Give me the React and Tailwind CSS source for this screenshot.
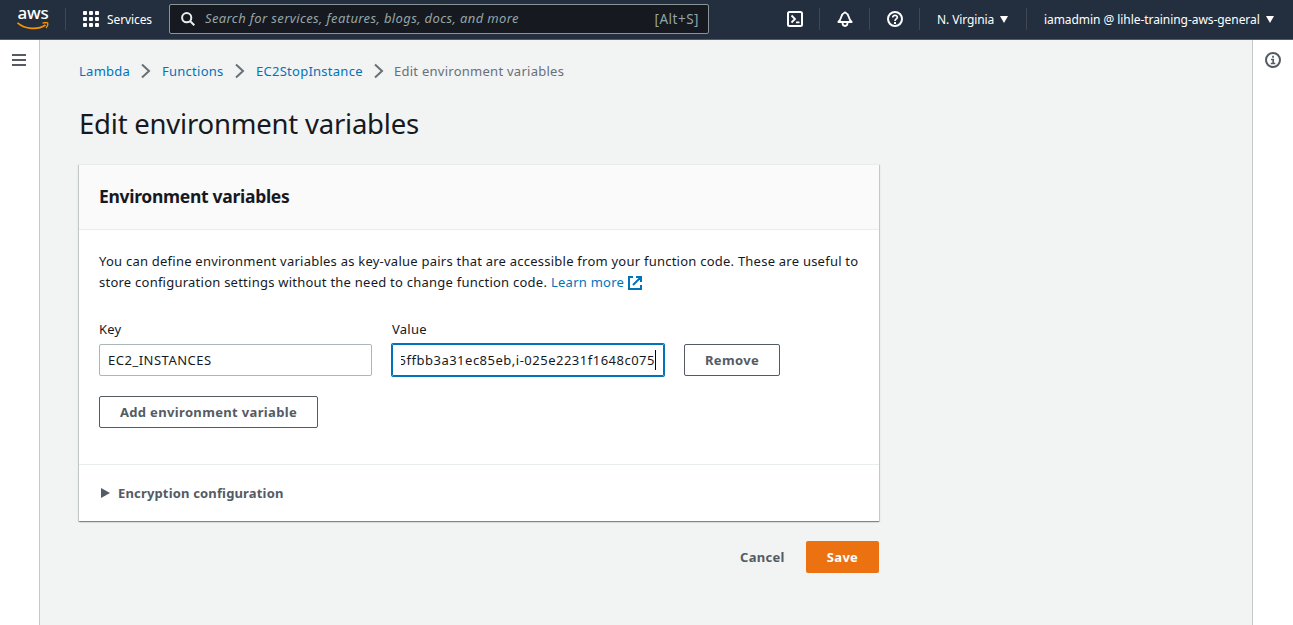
import React from "react";

function Sep() {
  return <div className="h-[22px] w-px shrink-0 bg-[#414750]" />;
}

function Chevron() {
  return (
    <svg className="h-4 w-[10px] shrink-0" viewBox="0 0 10 16" fill="none" stroke="#687078" strokeWidth="2">
      <path d="M1 1.5 L8 8 L1 14.5" />
    </svg>
  );
}

function Caret() {
  return (
    <svg className="h-[7px] w-2 shrink-0" viewBox="0 0 8 7" fill="#fff">
      <path d="M0 0 H8 L4 7 Z" />
    </svg>
  );
}

function AwsLogo() {
  return (
    <div className="flex h-[22px] w-8 shrink-0 flex-col items-center">
      <span className="h-[14px] text-[17px] leading-[10px] font-medium tracking-[-0.3px] text-white">aws</span>
      <svg className="h-2 w-8 shrink-0" viewBox="0 0 32 8" fill="none" stroke="#f79400">
        <path d="M0.500 0.800 C8 7.500 21 8 28.500 3" strokeWidth="1.8" />
        <path d="M25.5 1.2 C28 0.4 30 0.4 30.6 1 C31 2 30.3 4.5 29 6" strokeWidth="1.3" />
      </svg>
    </div>
  );
}

const gridCells = [0, 1, 2, 3, 4, 5, 6, 7, 8];

function Header() {
  return (
    <header className="flex h-10 shrink-0 items-start border-b border-[#545b64] bg-[#232f3e] text-[12px] text-white">
      <div className="flex h-[38px] w-full items-center">
        <div className="ml-[17px] flex"><AwsLogo /></div>
        <div className="ml-4 flex"><Sep /></div>
        <div className="ml-[17px] grid grid-cols-3 gap-[2px]">
          {gridCells.map((c) => (
            <span key={c} className="h-[4px] w-[4px] rounded-[1px] bg-white" />
          ))}
        </div>
        <span className="mt-[2px] ml-2 w-[62px] tracking-[-0.1px] whitespace-nowrap">Services</span>
        <div className="flex h-[30px] w-[540px] items-center rounded-[2px] border border-[#879596] bg-[#16191f] text-[#95a5a6]">
          <svg className="ml-[11px] h-[14px] w-[14px]" viewBox="0 0 14 14" fill="none" stroke="#eaeded" strokeWidth="2">
            <circle cx="5.7" cy="5.7" r="4.6" />
            <path d="M9 9 L13.3 13.3" />
          </svg>
          <span className="ml-[10px] text-[13px] tracking-[0.38px] whitespace-nowrap italic">Search for services, features, blogs, docs, and more</span>
          <span className="mr-[9px] ml-auto text-[13.5px] tracking-[0.5px]">[Alt+S]</span>
        </div>
        <svg className="ml-[78px] h-4 w-4" viewBox="0 0 16 16" fill="none" stroke="#fff" strokeWidth="2">
          <rect x="1" y="1" width="14" height="14" rx="1.5" />
          <path d="M4.5 4.5 L8 8 L4.5 11.5 M9 11.3 H12.5" strokeWidth="1.8" />
        </svg>
        <div className="ml-4 flex"><Sep /></div>
        <svg className="ml-[17px] h-4 w-4" viewBox="0 0 16 16" fill="none" stroke="#fff" strokeWidth="2" strokeLinejoin="round">
          <path d="M1.300 11 H14.700 C12.700 9.500 12.300 8 11.800 6 C11.300 3.800 10 2.300 8 1.300 C6 2.300 4.700 3.800 4.200 6 C3.700 8 3.300 9.500 1.300 11 Z" strokeWidth="1.8" />
          <path d="M5.500 12 C5.700 16 10.300 16 10.500 12" strokeWidth="1.8" />
        </svg>
        <div className="ml-4 flex"><Sep /></div>
        <svg className="ml-[17px] h-4 w-4" viewBox="0 0 16 16" fill="none" stroke="#fff" strokeWidth="2">
          <circle cx="8" cy="8" r="7" />
          <path d="M5.7 6.5 C5.700 3.500 10.500 3.700 10.300 6.400 C10.200 8 8 7.800 8 10" strokeWidth="1.7" />
          <path d="M8 11 V13" />
        </svg>
        <div className="ml-4 flex"><Sep /></div>
        <span className="mt-[2px] ml-[17px] w-[63px] tracking-[-0.1px] whitespace-nowrap">N. Virginia</span>
        <Caret />
        <div className="ml-[18px] flex"><Sep /></div>
        <span className="mt-[2px] ml-[17px] w-[222px] tracking-[-0.06px] whitespace-nowrap">iamadmin @ lihle-training-aws-general</span>
        <Caret />
      </div>
    </header>
  );
}

function Breadcrumbs() {
  return (
    <nav className="flex h-[22px] items-center text-[13px] tracking-[0.26px] whitespace-nowrap text-[#0073bb]">
      <span className="w-[62px] pt-[2px]">Lambda</span>
      <Chevron />
      <span className="ml-[11px] w-[73px] pt-[2px]">Functions</span>
      <Chevron />
      <span className="ml-[11px] w-[118px] pt-[2px]">EC2StopInstance</span>
      <Chevron />
      <span className="ml-[10px] pt-[2px] text-[#687078]">Edit environment variables</span>
    </nav>
  );
}

export default function App() {
  return (
    <div className="flex h-[625px] w-[1293px] flex-col overflow-hidden bg-[#f2f3f3] font-['Noto_Sans',sans-serif] text-[#16191f]">
      <Header />
      <div className="flex flex-1">
        <aside className="w-[40px] shrink-0 border-r border-[#c3c8c9] bg-white pt-[14px] pl-3">
          <div className="flex w-[14px] flex-col gap-[3px]">
            <span className="h-[2px] bg-[#545b64]" />
            <span className="h-[2px] bg-[#545b64]" />
            <span className="h-[2px] bg-[#545b64]" />
          </div>
        </aside>
        <main className="flex-1 pt-5 pl-[39px]">
          <Breadcrumbs />
          <h1 className="mt-[24px] h-9 text-[27.5px] leading-9 tracking-[-0.22px] whitespace-nowrap">Edit environment variables</h1>
          <section className="mt-[22px] h-[357px] w-[800px] bg-white shadow-[0_1px_1px_0_rgba(0,28,36,0.3),1px_1px_1px_0_rgba(0,28,36,0.15),-1px_1px_1px_0_rgba(0,28,36,0.15)]">
            <div className="flex h-[66px] items-center border-y border-[#eaeded] bg-[#fafafa] px-5 pb-[2px]">
              <h2 className="text-[17.5px] font-bold tracking-[-0.3px]">Environment variables</h2>
            </div>
            <div className="h-[234px] px-5 pt-[21px]">
              <p className="text-[13px] leading-[21px] tracking-[0.235px] whitespace-nowrap">
                You can define environment variables as key-value pairs that are accessible from your function code. These are useful to
              </p>
              <p className="flex items-center text-[13px] leading-[21px] tracking-[0.24px] whitespace-nowrap">
                <span className="w-[452px]">store configuration settings without the need to change function code.</span>
                <span className="w-[77px] text-[#0073bb]">Learn more</span>
                <svg className="h-[14px] w-[14px]" viewBox="0 0 14 14" fill="none" stroke="#0073bb" strokeWidth="2">
                  <path d="M5 1 H1 V13 H13 V9 M8 1 H13 V6 M13 1 L5 9" />
                </svg>
              </p>
              <div className="mt-[25px] flex items-end gap-5 text-[13px] tracking-[0.25px]">
                <label className="w-[273px]">
                  <span className="block h-[26px] leading-[22px]">Key</span>
                  <span className="flex h-8 items-center rounded-[2px] border border-[#aab7b8] px-2 pt-[2px] tracking-[0.5px]">EC2_INSTANCES</span>
                </label>
                <label className="w-[272px]">
                  <span className="block h-[26px] leading-[22px]">Value</span>
                  <span className="flex h-8 items-center justify-end rounded-[1px] border border-[#0073bb] pr-[7px] pl-2 shadow-[0_0_0_1px_#0073bb]">
                    <span className="flex h-5 flex-1 items-center justify-end overflow-hidden border-r border-black pt-[2px] tracking-[0.5px] whitespace-nowrap">5ffbb3a31ec85eb,i-025e2231f1648c075</span>
                  </span>
                </label>
                <button className="h-8 w-24 rounded-[2px] border border-[#545b64] pt-[2px] font-bold tracking-[0.33px] text-[#545b64]">Remove</button>
              </div>
              <button className="mt-5 h-8 w-[219px] rounded-[2px] border border-[#545b64] pt-[2px] text-[13px] font-bold tracking-[0.34px] whitespace-nowrap text-[#545b64]">Add environment variable</button>
            </div>
            <div className="flex h-[57px] items-center border-t border-[#eaeded] pl-[22px] text-[13px] font-bold text-[#545b64]">
              <svg className="h-[10px] w-[9px]" viewBox="0 0 9 10" fill="#545b64"><path d="M0 0 L9 5 L0 10 Z" /></svg>
              <span className="ml-2 pt-[2px] tracking-[0.16px]">Encryption configuration</span>
            </div>
          </section>
          <div className="mt-5 flex h-8 w-[800px] items-center justify-end text-[13px] font-bold tracking-[0.3px]">
            <span className="w-[66px] pt-[2px] text-[#545b64]">Cancel</span>
            <button className="h-8 w-[73px] rounded-[2px] bg-[#ec7211] pt-[2px] text-white">Save</button>
          </div>
        </main>
        <aside className="w-[41px] shrink-0 border-l border-[#c3c8c9] bg-white pt-3 pl-3">
          <svg className="h-4 w-4" viewBox="0 0 16 16" fill="none" stroke="#545b64" strokeWidth="2">
            <circle cx="8" cy="8" r="7" />
            <path d="M8 3.800 V5.800 M6 7.500 H8.200 V11.500 M5.800 11.500 H10.300" strokeWidth="1.700" />
          </svg>
        </aside>
      </div>
    </div>
  );
}
